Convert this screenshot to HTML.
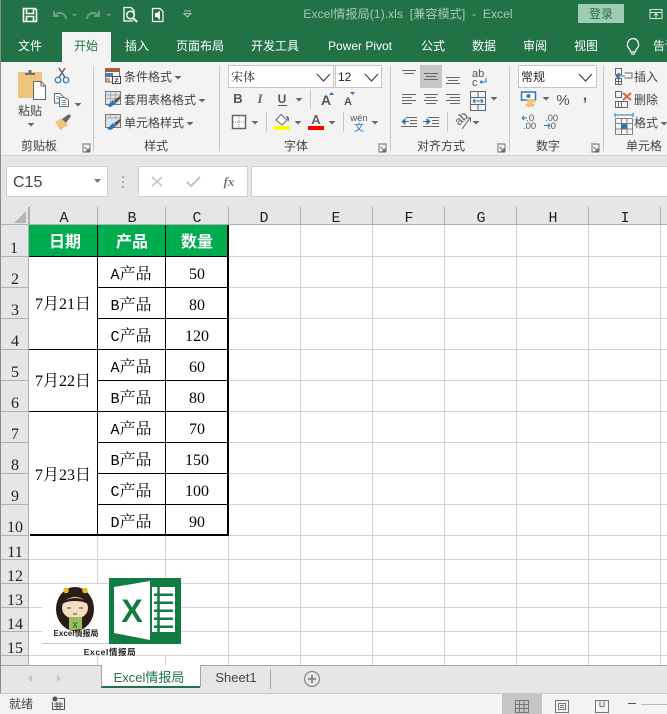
<!DOCTYPE html>
<html lang="zh"><head><meta charset="utf-8"><title>Excel</title>
<style>
html,body{margin:0;padding:0;width:667px;height:714px;overflow:hidden;background:#fff}
svg{display:block}
text{font-family:"Liberation Sans","Noto Sans CJK SC",sans-serif;font-size:12px;fill:#444}
.t{fill:#fff;text-anchor:middle}
.m{text-anchor:middle}
.c{font-family:"Liberation Serif","Noto Serif CJK SC",serif;font-size:16px;fill:#000;text-anchor:middle}
.c tspan{font-family:"Liberation Mono",monospace;font-size:15px}
.h{font-family:"Liberation Sans","Noto Sans CJK SC",sans-serif;font-size:16px;font-weight:700;fill:#fff;text-anchor:middle}
.k{font-family:"Liberation Mono",monospace;font-size:15px;fill:#222;text-anchor:middle}
.r{font-family:"Liberation Serif",serif;font-size:16px;fill:#222;text-anchor:middle}
.l{stroke:#666;stroke-width:1;fill:none}
.b{stroke:#2b74b8;fill:none}
</style></head><body>
<svg width="667" height="714" viewBox="0 0 667 714" xmlns="http://www.w3.org/2000/svg">
<defs>
<path id="car" d="M-3.5 0H3.5L0 3.5Z" fill="#666"/>
<path id="lau" d="M0 0H8V8M1 1V8H8M2.5 3L7 7M4 7H7V4" fill="none" stroke="#666" stroke-width=".9"/>
</defs>
<!-- title/tabs -->
<rect width="667" height="62" fill="#217346"/>
<!-- save -->
<path d="M23.5 8.5H35L36.5 10V21.5H23.5ZM26.5 9V13.5H33.5V9M26.5 21V16.5H33.5V21" fill="none" stroke="#fff" stroke-width="1.6"/>
<!-- undo redo -->
<path d="M54 11V16H59M54.5 15.5C58 11.5 65 12 66 19" fill="none" stroke="#6a9f81" stroke-width="2"/>
<path d="M72 14H77L74.5 16.5Z" fill="#6a9f81"/>
<path d="M99 11V16H94M98.5 15.5C95 11.5 88 12 87 19" fill="none" stroke="#6a9f81" stroke-width="2"/>
<path d="M106 14H111L108.5 16.5Z" fill="#6a9f81"/>
<!-- preview -->
<path d="M133 21H124V7.5H131L134 10.5V13" fill="none" stroke="#fff" stroke-width="1.3"/>
<circle cx="130.500" cy="15" r="3.800" fill="none" stroke="#fff" stroke-width="1.500"/>
<path d="M133 18L137 22" stroke="#fff" stroke-width="2"/>
<!-- touch / speaker -->
<path d="M152.500 8.500H160L163 11.500V21.500H152.500Z" fill="none" stroke="#fff" stroke-width="1.200"/>
<path d="M155 13H157L160 10.500V20L157 17H155Z" fill="#fff"/>
<!-- customise -->
<path d="M184 11H191M184 13.500H191L187.500 17Z" fill="none" stroke="#a9cbb7"/>
<text x="408" y="18" class="m" style="fill:#a6c9b5;font-size:12.2px" xml:space="preserve">Excel情报局(1).xls  [兼容模式]  -  Excel</text>
<rect x="578" y="4" width="46" height="19" rx="1" fill="#9fcdb3"/>
<text x="601" y="18" class="m" style="fill:#217346">登录</text>
<path d="M650 9.500H662V18.500H650ZM650 12.500H662M656 18V14M654 15.500L656 13.500L658 15.500" fill="none" stroke="#d5e5db"/>
<rect x="62" y="32" width="49" height="30" fill="#f3f3f3"/>
<g>
<text x="30" y="50" class="t">文件</text>
<text x="86" y="50" class="m" style="fill:#217346">开始</text>
<text x="137" y="50" class="t">插入</text>
<text x="200" y="50" class="t">页面布局</text>
<text x="275" y="50" class="t">开发工具</text>
<text x="360" y="50" class="t">Power Pivot</text>
<text x="433" y="50" class="t">公式</text>
<text x="484" y="50" class="t">数据</text>
<text x="535" y="50" class="t">审阅</text>
<text x="586" y="50" class="t">视图</text>
<text x="653" y="50" style="fill:#fff">告诉</text>
</g>
<path d="M633 38.500A6 6 0 0 0 629.500 49C630.500 50 630.500 51 630.500 52H635.500C635.500 51 635.500 50 636.500 49A6 6 0 0 0 633 38.500ZM631 54H635" fill="none" stroke="#fff" stroke-width="1.200"/>

<!-- ribbon -->
<rect y="62" width="667" height="93" fill="#f3f3f3"/>
<rect y="155" width="667" height="52" fill="#e6e6e6"/>
<rect y="155" width="667" height="1" fill="#d2d2d2"/>
<g fill="#c8c8c8">
<rect x="93" y="66" width="1" height="85"/><rect x="219" y="66" width="1" height="85"/><rect x="390" y="66" width="1" height="85"/><rect x="509" y="66" width="1" height="85"/><rect x="603" y="66" width="1" height="85"/>
</g>
<!-- clipboard -->
<rect x="18" y="72" width="24" height="26" rx="1" fill="#efc57d"/>
<path d="M25 75V73H28.500V70H31.500V73H35V75Z" fill="#737373"/>
<path d="M33.500 81.500H41L45.500 86V99.500H33.500Z" fill="#fff" stroke="#666"/>
<path d="M41 82V86H45" fill="none" stroke="#666"/>
<text x="30" y="115" class="m" style="font-size:12px">粘贴</text>
<use href="#car" x="31" y="123"/>
<!-- scissors -->
<circle cx="58" cy="80" r="2.800" class="b" stroke-width="1.200"/><circle cx="66" cy="80" r="2.800" class="b" stroke-width="1.200"/>
<path d="M59 77.500L65 68M65 77.500L59 68" stroke="#666" stroke-width="1.500"/>
<!-- copy -->
<path d="M54.500 93.500H60L63 96.500V103H54.500Z" fill="#fff" stroke="#666"/>
<path d="M59.500 97.500H64.500L68.500 100V106.500H59.500Z" fill="#fff" stroke="#666"/>
<path d="M61.500 100.500H66M61.500 102.500H66.500M61.500 104.500H66.500M56.500 96.500H59M56.500 98.500H59" stroke="#2b74b8" stroke-width=".8"/>
<use href="#car" x="78" y="103"/>
<!-- painter -->
<path d="M55 122L62 118L68 125L60 130Z" fill="#efc57d"/>
<path d="M62 119L69 114L71 116L66 123Z" fill="#666"/>
<text x="39" y="150" class="m">剪贴板</text>
<use href="#lau" x="82" y="144"/>

<!-- styles -->
<rect x="105" y="68" width="14" height="4" fill="#b9532b"/>
<rect x="105" y="73" width="8" height="4" fill="#3f7fc1"/><rect x="105" y="78" width="5" height="4" fill="#e5a34b"/>
<path d="M105.500 68.500H119.500V76M105.500 68.500V82H112" fill="none" stroke="#777"/>
<rect x="112.500" y="76.500" width="8" height="7" fill="#fff" stroke="#444"/>
<path d="M114.500 79H118.500M114.500 81.500H118.500M118 78L115 83" stroke="#444" stroke-width=".7"/>
<text x="124" y="81">条件格式</text><use href="#car" x="178" y="76"/>
<g id="tb"><rect x="105.500" y="91.500" width="15" height="13" fill="#dce3ea" stroke="#777"/>
<path d="M105.500 95H120.500M105.500 98.500H120.500M110.500 91.500V104M115.500 91.500V104" stroke="#999" stroke-width=".7"/>
<path d="M107 106L113 100L116 103L111 107Z" fill="#2b74b8"/><path d="M114 100L120 96L121 98L116 103Z" fill="#555"/></g>
<text x="124" y="104">套用表格格式</text><use href="#car" x="202" y="99"/>
<g transform="translate(0 23)"><rect x="105.500" y="91.500" width="15" height="13" fill="#dce3ea" stroke="#777"/>
<path d="M105.500 95H120.500M110.500 91.500V95M115.500 91.500V95" stroke="#999" stroke-width=".7"/>
<path d="M107 106L113 100L116 103L111 107Z" fill="#2b74b8"/><path d="M114 100L120 96L121 98L116 103Z" fill="#555"/></g>
<text x="124" y="127">单元格样式</text><use href="#car" x="190" y="122"/>
<text x="156" y="150" class="m">样式</text>

<!-- font -->
<rect x="228.500" y="65.500" width="105" height="22" fill="#fff" stroke="#c6c6c6"/>
<rect x="335.500" y="65.500" width="46" height="22" fill="#fff" stroke="#c6c6c6"/>
<text x="231" y="81" style="font-family:'Liberation Serif','Noto Serif CJK SC',serif;font-size:12px;fill:#222">宋体</text>
<text x="338" y="81" style="fill:#222;font-size:12px">12</text>
<path d="M317 74L323.500 81L330 74M365 74L371.500 81L378 74" fill="none" stroke="#444" stroke-width="1.200"/>
<text x="238" y="103" class="m" style="font-weight:700;font-size:13px;fill:#555">B</text>
<text x="260" y="103" class="m" style="font-style:italic;font-family:'Liberation Serif',serif;font-weight:700;font-size:13px;fill:#666">I</text>
<text x="282" y="103" class="m" style="font-weight:700;font-size:12px;fill:#555">U</text>
<rect x="278" y="105" width="9" height="1" fill="#555"/>
<use href="#car" x="299" y="98"/>
<rect x="310" y="89" width="1" height="20" fill="#c8c8c8"/>
<text x="326" y="105" class="m" style="font-size:14px;font-weight:700;fill:#555">A</text>
<path d="M329 95H334L331.500 92Z" fill="#2b74b8"/>
<text x="348" y="105" class="m" style="font-size:11px;font-weight:700;fill:#555">A</text>
<path d="M350 92H355L352.500 95Z" fill="#2b74b8"/>
<!-- row 3 -->
<rect x="232.500" y="115.500" width="13" height="13" fill="#fff" stroke="#666" stroke-width="1.500"/>
<path d="M239 116V128M233 122H245" stroke="#888" stroke-dasharray="1 1"/>
<use href="#car" x="255" y="121"/>
<rect x="266" y="112" width="1" height="20" fill="#c8c8c8"/>
<path d="M276 120L281 114.500L287 120L282 125Z" fill="#fff" stroke="#666"/>
<path d="M286 116C289 116 290 119 288 122C288 120 287 118 286 116Z" fill="#2b74b8"/>
<rect x="274" y="126" width="16" height="4" fill="#ff0"/>
<use href="#car" x="298" y="121"/>
<text x="316" y="124" class="m" style="font-weight:700;font-size:13px;fill:#666">A</text>
<rect x="308" y="126" width="16" height="4" fill="#f00"/>
<use href="#car" x="332" y="121"/>
<rect x="343" y="112" width="1" height="20" fill="#c8c8c8"/>
<text x="359" y="121" class="m" style="font-size:9.500px;fill:#555">wén</text>
<text x="359" y="131" class="m" style="font-size:10px;fill:#2b74b8">文</text>
<use href="#car" x="375" y="121"/>
<text x="296" y="150" class="m">字体</text>
<use href="#lau" x="378" y="144"/>

<!-- align -->
<rect x="420" y="65" width="22" height="23" fill="#c6c6c6"/>
<g class="l" style="stroke:#666">
<path d="M402 70.500H416M404 73.500H414"/>
<path d="M424 73.500H438M426 76.500H436M424 79.500H438"/>
<path d="M446 77.500H460M448 80.500H458M446 83.500H460"/>
<path d="M402 94.500H416M402 97.500H412M402 100.500H416M402 103.500H412"/>
<path d="M424 94.500H438M426 97.500H436M424 100.500H438M426 103.500H436"/>
<path d="M446 94.500H460M450 97.500H460M446 100.500H460M450 103.500H460"/>
<path d="M406 117.500H417M410 120.500H417M410 123.500H417M401 126.500H417"/>
<path d="M428 117.500H439M432 120.500H439M432 123.500H439M423 126.500H439"/>
<path d="M470.500 91.500H485.500V110.500H470.500ZM470.500 97.500H485.500M470.500 104.500H485.500M478 91.500V97.500M478 104.500V110.500"/>
</g>
<path d="M402 121.500H409M402 121.500L405 119V124Z" stroke="#2b74b8" fill="#2b74b8"/>
<path d="M423 121.500H430M430 121.500L427 119V124Z" stroke="#2b74b8" fill="#2b74b8"/>
<path d="M473 101H483M473 101L475 99M473 101L475 103M483 101L481 99M483 101L481 103" fill="none" stroke="#2b74b8"/>
<text x="472" y="77" style="font-size:11px;fill:#555">ab</text>
<text x="472" y="86" style="font-size:11px;fill:#555">c</text>
<path d="M486 78V82H480M480 82L482 80.500M480 82L482 83.500" stroke="#2b74b8" fill="none"/>
<use href="#car" x="494" y="97"/>
<rect x="447" y="112" width="1" height="20" fill="#c8c8c8"/>
<text transform="translate(459 126) rotate(-45)" style="font-size:12px;fill:#555">ab</text>
<path d="M462 129L470 118M467 118H470.500V122" fill="none" stroke="#666"/>
<use href="#car" x="476" y="121"/>
<text x="441" y="150" class="m">对齐方式</text>
<use href="#lau" x="497" y="144"/>

<!-- number -->
<rect x="518.500" y="65.500" width="78" height="22" fill="#fff" stroke="#c6c6c6"/>
<text x="521" y="81" style="fill:#222">常规</text>
<path d="M579 74L585.500 81L592 74" fill="none" stroke="#444" stroke-width="1.200"/>
<rect x="521.500" y="92" width="14" height="8" fill="#fff" stroke="#2b74b8" stroke-width="1.500"/>
<circle cx="528.500" cy="96" r="2" fill="#2b74b8"/>
<ellipse cx="531" cy="101" rx="5" ry="2" fill="#efc57d"/><ellipse cx="530" cy="105" rx="5" ry="2" fill="#efc57d"/>
<use href="#car" x="546" y="97"/>
<text x="563" y="105" class="m" style="font-size:15px;fill:#555">%</text>
<text x="585" y="100" class="m" style="font-size:16px;font-weight:700;fill:#555">,</text>
<text x="521" y="121" style="font-size:9.500px;fill:#555" xml:space="preserve">  .0</text>
<text x="523" y="129" style="font-size:9.500px;fill:#555">.00</text>
<text x="545" y="121" style="font-size:9.500px;fill:#555">.00</text>
<text x="548" y="129" style="font-size:9.500px;fill:#555">.0</text>
<path d="M522 118H527M522 118L524 116M522 118L524 120M544 125.500H550M550 125.500L548 123.500M550 125.500L548 127.500" fill="none" stroke="#2b74b8"/>
<text x="548" y="150" class="m">数字</text>
<use href="#lau" x="591" y="144"/>

<!-- cells -->
<g fill="none" stroke="#666">
<path d="M615.500 68.500H621.500V74.500H615.500ZM615.500 78.500H621.500V84.500H615.500ZM618.500 78.500V84.500M615.500 81.500H621.500M624.500 73H632V78H624.500"/>
<path d="M615.500 91.500H621.500V97.500H615.500ZM615.500 101.500H621.500V107.500H615.500ZM618.500 101.500V107.500M621.500 101.500H627.500V107.500H621.500"/>
<path d="M615.500 118.500H632.500V134.500H615.500ZM615.500 123.500H632.500M615.500 129H632.500M621.500 118.500V134.500M627 118.500V134.500" stroke-width=".8"/>
</g>
<path d="M616 76H625M616 76L619 73.500V78.500Z" stroke="#2b74b8" fill="#2b74b8"/>
<path d="M623 93L631 100M631 93L623 100" stroke="#e0603a" stroke-width="2"/>
<path d="M615 115H633M615 113V117M633 113V117" stroke="#2b74b8"/>
<rect x="621" y="124" width="6" height="5" fill="#2b74b8"/>
<text x="634" y="81" style="font-size:12px">插入</text>
<text x="634" y="104" style="font-size:12px">删除</text>
<text x="634" y="127" style="font-size:12px">格式</text>
<use href="#car" x="664" y="122"/>
<text x="644" y="150" class="m">单元格</text>

<!-- formula bar -->
<rect x="6.500" y="166.500" width="101" height="30" fill="#fff" stroke="#d0d0d0"/>
<text x="13" y="187" style="font-size:16px;fill:#444">C15</text>
<path d="M94 179H101L97.500 183Z" fill="#777"/>
<path d="M123 176V178M123 181V183M123 186V188" stroke="#aaa" stroke-width="2"/>
<rect x="138.500" y="166.500" width="109" height="30" fill="#fff" stroke="#d0d0d0"/>
<path d="M152 177L162 186M162 177L152 186" stroke="#c5c5c5" stroke-width="1.600"/>
<path d="M187 182L191 186L200 177" fill="none" stroke="#c5c5c5" stroke-width="2.200"/>
<text x="229" y="186" class="m" style="font-family:'Liberation Serif',serif;font-style:italic;font-weight:700;font-size:13px;fill:#777">fx</text>
<rect x="251.500" y="166.500" width="416" height="30" fill="#fff" stroke="#d0d0d0"/>

<!-- sheet headers -->
<rect y="207" width="667" height="18" fill="#e6e6e6"/>
<rect y="207" width="29" height="458" fill="#e6e6e6"/>
<path d="M26 211V223H14Z" fill="#b5b5b5"/>
<g fill="#b0b0b0">
<rect x="29" y="207" width="1" height="18"/><rect x="97" y="207" width="1" height="18"/><rect x="165" y="207" width="1" height="18"/><rect x="228" y="207" width="1" height="18"/><rect x="300" y="207" width="1" height="18"/><rect x="372" y="207" width="1" height="18"/><rect x="444" y="207" width="1" height="18"/><rect x="516" y="207" width="1" height="18"/><rect x="588" y="207" width="1" height="18"/><rect x="660" y="207" width="1" height="18"/>
<rect x="28" y="207" width="1" height="458"/>
<rect y="224" width="667" height="1"/>
<rect x="1" y="256" width="28" height="1"/><rect x="1" y="287" width="28" height="1"/><rect x="1" y="318" width="28" height="1"/><rect x="1" y="349" width="28" height="1"/><rect x="1" y="380" width="28" height="1"/><rect x="1" y="411" width="28" height="1"/><rect x="1" y="442" width="28" height="1"/><rect x="1" y="473" width="28" height="1"/><rect x="1" y="504" width="28" height="1"/><rect x="1" y="535" width="28" height="1"/><rect x="1" y="559" width="28" height="1"/><rect x="1" y="583" width="28" height="1"/><rect x="1" y="607" width="28" height="1"/><rect x="1" y="631" width="28" height="1"/><rect x="1" y="655" width="28" height="1"/>
</g>
<g>
<text x="64" y="222" class="k">A</text><text x="132" y="222" class="k">B</text><text x="197" y="222" class="k">C</text><text x="264" y="222" class="k">D</text><text x="336" y="222" class="k">E</text><text x="409" y="222" class="k">F</text><text x="481" y="222" class="k">G</text><text x="553" y="222" class="k">H</text><text x="625" y="222" class="k">I</text>
<text x="14" y="253" class="r">1</text><text x="15" y="284" class="r">2</text><text x="15" y="315" class="r">3</text><text x="15" y="346" class="r">4</text><text x="15" y="377" class="r">5</text><text x="15" y="408" class="r">6</text><text x="15" y="439" class="r">7</text><text x="15" y="470" class="r">8</text><text x="15" y="501" class="r">9</text><text x="15" y="532" class="r">10</text><text x="15" y="557" class="r">11</text><text x="15" y="581" class="r">12</text><text x="15" y="605" class="r">13</text><text x="15" y="629" class="r">14</text><text x="15" y="653" class="r">15</text>
</g>

<!-- gridlines -->
<g fill="#d4d4d4">
<rect x="229" y="256" width="438" height="1"/><rect x="229" y="287" width="438" height="1"/><rect x="229" y="318" width="438" height="1"/><rect x="229" y="349" width="438" height="1"/><rect x="229" y="380" width="438" height="1"/><rect x="229" y="411" width="438" height="1"/><rect x="229" y="442" width="438" height="1"/><rect x="229" y="473" width="438" height="1"/><rect x="229" y="504" width="438" height="1"/><rect x="229" y="535" width="438" height="1"/>
<rect x="29" y="559" width="638" height="1"/><rect x="29" y="583" width="638" height="1"/><rect x="29" y="607" width="638" height="1"/><rect x="29" y="631" width="638" height="1"/><rect x="29" y="655" width="638" height="1"/>
<rect x="97" y="536" width="1" height="129"/><rect x="165" y="536" width="1" height="129"/><rect x="228" y="536" width="1" height="129"/>
<rect x="300" y="225" width="1" height="440"/><rect x="372" y="225" width="1" height="440"/><rect x="444" y="225" width="1" height="440"/><rect x="516" y="225" width="1" height="440"/><rect x="588" y="225" width="1" height="440"/><rect x="660" y="225" width="1" height="440"/>
</g>

<!-- table -->
<rect x="29" y="225" width="199" height="32" fill="#00ad4e"/>
<g fill="#000">
<rect x="97" y="225" width="1" height="310"/><rect x="165" y="225" width="1" height="310"/>
<rect x="29" y="256" width="199" height="1"/><rect x="97" y="287" width="131" height="1"/><rect x="97" y="318" width="131" height="1"/><rect x="29" y="349" width="199" height="1"/><rect x="97" y="380" width="131" height="1"/><rect x="29" y="411" width="199" height="1"/><rect x="97" y="442" width="131" height="1"/><rect x="97" y="473" width="131" height="1"/><rect x="97" y="504" width="131" height="1"/>
<rect x="30" y="534" width="199" height="2"/><rect x="227" y="225" width="2" height="311"/>
</g>
<g>
<text x="65" y="247" class="h">日期</text><text x="132" y="247" class="h">产品</text><text x="197" y="247" class="h">数量</text>
<text x="63" y="309" class="c">7月21日</text><text x="63" y="386" class="c">7月22日</text><text x="63" y="480" class="c">7月23日</text>
<text x="131" y="279" class="c"><tspan>A</tspan>产品</text><text x="197" y="279" class="c">50</text>
<text x="131" y="310" class="c"><tspan>B</tspan>产品</text><text x="197" y="310" class="c">80</text>
<text x="131" y="341" class="c"><tspan>C</tspan>产品</text><text x="197" y="341" class="c">120</text>
<text x="131" y="372" class="c"><tspan>A</tspan>产品</text><text x="197" y="372" class="c">60</text>
<text x="131" y="403" class="c"><tspan>B</tspan>产品</text><text x="197" y="403" class="c">80</text>
<text x="131" y="434" class="c"><tspan>A</tspan>产品</text><text x="197" y="434" class="c">70</text>
<text x="131" y="465" class="c"><tspan>B</tspan>产品</text><text x="197" y="465" class="c">150</text>
<text x="131" y="496" class="c"><tspan>C</tspan>产品</text><text x="197" y="496" class="c">100</text>
<text x="131" y="527" class="c"><tspan>D</tspan>产品</text><text x="197" y="527" class="c">90</text>
</g>

<!-- logo image -->
<rect x="42" y="584" width="139" height="71" fill="#fff"/>
<rect x="42" y="643" width="67" height="1" fill="#c8c8c8"/>
<ellipse cx="75" cy="609" rx="19" ry="22" fill="#2a1d18"/>
<circle cx="66" cy="590.500" r="2.800" fill="#e8b820"/><circle cx="85" cy="590.500" r="2.800" fill="#e8b820"/>
<ellipse cx="75" cy="608" rx="13" ry="11" fill="#f6dcc0"/>
<path d="M62 604C66 596 84 596 88 604C82 600 68 600 62 604Z" fill="#2a1d18"/>
<path d="M67 608H71M79 608H83M73 614H77" stroke="#5a4030" fill="none"/>
<rect x="69" y="617" width="13" height="13" rx="1" fill="#9bbd5a"/>
<text x="75" y="628" class="m" style="font-size:8px;font-weight:700;fill:#1e7a3a">X</text>
<text x="76" y="636" class="m" style="font-size:8px;font-weight:700;fill:#222">Excel情报局</text>
<text x="110" y="655" class="m" style="font-size:8.500px;font-weight:700;fill:#222;letter-spacing:.6px">Excel情报局</text>
<rect x="109" y="578" width="72" height="66" fill="#107c41"/>
<path d="M114 587L150 581V640L114 633Z" fill="#fff"/>
<rect x="152" y="587" width="23" height="45" fill="#fff"/>
<path d="M154 593.500H173V596H154ZM154 601.500H173V604H154ZM154 609.500H173V612H154ZM154 617.500H173V620H154ZM154 625.500H173V628H154Z" fill="#107c41"/>
<path d="M158.500 587V632" stroke="#107c41" stroke-width="2.500"/>
<text x="132" y="622" class="m" style="font-size:32px;font-weight:700;fill:#107c41">X</text>

<!-- sheet tabs -->
<rect y="665" width="667" height="28" fill="#e6e6e6"/>
<rect x="1" y="665" width="666" height="1" fill="#a3a3a3"/>
<rect x="0" y="0" width="1" height="693" fill="#8c8c8c"/>
<rect x="101" y="665" width="99" height="23" fill="#fff"/>
<rect x="101" y="686" width="99" height="2" fill="#217346"/>
<rect x="101" y="665" width="1" height="22" fill="#a3a3a3"/><rect x="200" y="665" width="1" height="22" fill="#a3a3a3"/>
<path d="M32 675V682L28 678.500ZM57 675V682L61 678.500Z" fill="#c4c4c4"/>
<text x="149" y="682" class="m" style="font-size:13px;fill:#217346">Excel情报局</text>
<text x="236" y="682" class="m" style="font-size:13px;fill:#444">Sheet1</text>
<rect x="270" y="669" width="1" height="20" fill="#a8a8a8"/>
<circle cx="312" cy="679" r="7.500" fill="none" stroke="#888" stroke-width="1.200"/>
<path d="M308 679H316M312 675V683" stroke="#777" stroke-width="1.500"/>

<!-- status -->
<rect y="693" width="667" height="21" fill="#f3f3f3"/>
<rect y="693" width="667" height="1" fill="#c8c8c8"/>
<text x="9" y="708" style="fill:#444">就绪</text>
<circle cx="55" cy="699" r="2.500" fill="#555"/>
<path d="M58.500 698.500H64.500V709.500H52.500V702M54 704H63M54 706.500H63M57 702V709M60 702V709" fill="none" stroke="#555"/>
<rect x="502" y="694" width="40" height="20" fill="#c6c6c6"/>
<path d="M515.500 700.500H528.500V712.500H515.500ZM515.500 704.500H528.500M515.500 708.500H528.500M519.500 700.500V712.500M524 700.500V712.500" fill="none" stroke="#777"/>
<path d="M555.500 700.500H568.500V712.500H555.500ZM558.500 703.500H565.500V709.500H558.500ZM560 705.500H564M560 707.500H564" fill="none" stroke="#777"/>
<path d="M595.500 700.500H608.500V712.500H595.500ZM600 700.500V706.500H604V700.500" fill="none" stroke="#777"/>
<rect x="628" y="703" width="8" height="1" fill="#555"/>
<rect x="641" y="704" width="26" height="1" fill="#bbb"/>
</svg>
</body></html>
